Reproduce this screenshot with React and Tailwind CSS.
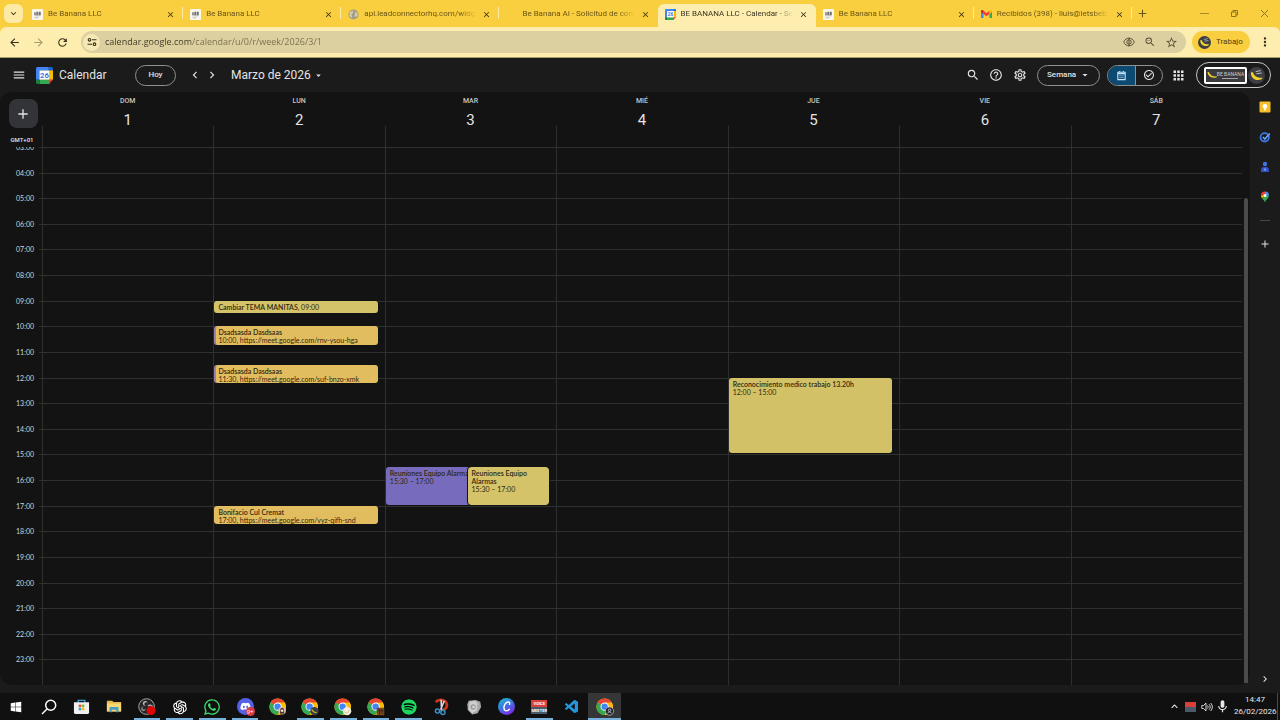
import React from 'react';
import {
  MdAdd,
  MdApps,
  MdArrowBack,
  MdArrowDropDown,
  MdArrowForward,
  MdCheckCircleOutline,
  MdChevronLeft,
  MdChevronRight,
  MdClose,
  MdHelpOutline,
  MdKeyboardArrowDown,
  MdKeyboardArrowUp,
  MdMenu,
  MdMic,
  MdMoreVert,
  MdOutlineSettings,
  MdRefresh,
  MdSearch,
  MdStarBorder,
  MdOutlineZoomOut,
} from 'react-icons/md';
import { FaDiscord, FaSpotify, FaWhatsapp, FaWindows } from 'react-icons/fa';
import { AiOutlineOpenAI } from 'react-icons/ai';
import { VscVscode } from 'react-icons/vsc';

const FIRST_HOUR = 3;
const LAST_HOUR = 24;
const HOURS = Array.from({ length: LAST_HOUR - FIRST_HOUR }, (_, i) => FIRST_HOUR + i);

const TABS = [
  { title: 'Be Banana LLC', icon: 'banana' },
  { title: 'Be Banana LLC', icon: 'banana' },
  { title: 'api.leadconnectorhq.com/widg', icon: 'globe' },
  { title: 'Be Banana AI - Solicitud de con', icon: 'none' },
  { title: 'BE BANANA LLC - Calendar - Se', icon: 'calendar', active: true },
  { title: 'Be Banana LLC', icon: 'banana' },
  { title: 'Recibidos (398) - lluis@letsbeb', icon: 'gmail' },
];

const DAYS = [
  { name: 'DOM', date: 1, events: [] },
  {
    name: 'LUN',
    date: 2,
    events: [
      { title: 'Cambiar TEMA MANITAS', detail: '09:00', inline: true, start: 9, end: 9.5, color: 'bg-[#d5c36a] px-1' },
      { title: 'Dsadsasda Dasdsaas', detail: '10:00, https://meet.google.com/rnv-ysou-hga', start: 10, end: 10.75, color: 'bg-[#e2bd5f] border-l-2 border-[#9c7fa8] px-0.5' },
      { title: 'Dsadsasda Dasdsaas', detail: '11:30, https://meet.google.com/suf-bnzo-xmk', start: 11.5, end: 12.25, color: 'bg-[#e2bd5f] border-l-2 border-[#9c7fa8] px-0.5' },
      { title: 'Bonifacio Cul Cremat', detail: '17:00, https://meet.google.com/vyz-qifh-snd', start: 17, end: 17.75, color: 'bg-[#e2bd5f] px-1' },
    ],
  },
  {
    name: 'MAR',
    date: 3,
    events: [
      { title: 'Reuniones Equipo Alarmas', detail: '15:30 – 17:00', start: 15.5, end: 17, left: 0, width: 52, nowrap: true, color: 'bg-[#766bbd] px-1' },
      { title: 'Reuniones Equipo Alarmas', detail: '15:30 – 17:00', start: 15.5, end: 17, left: 50, width: 50, color: 'bg-[#d5c36a] outline outline-[#131313] px-1' },
    ],
  },
  { name: 'MIÉ', date: 4, events: [] },
  {
    name: 'JUE',
    date: 5,
    events: [
      { title: 'Reconocimiento medico trabajo 13.20h', detail: '12:00 – 15:00', start: 12, end: 15, color: 'bg-[#d3c168] px-1' },
    ],
  },
  { name: 'VIE', date: 6, events: [] },
  { name: 'SÁB', date: 7, events: [] },
];

const percentOfDay = (hours) => `${(hours / (LAST_HOUR - FIRST_HOUR)) * 100}%`;

/* ---------- Logos ---------- */

const BananaFavicon = () => (
  <svg viewBox="0 0 12 12" className="size-[11px]">
    <rect width="12" height="12" rx="1" fill="#fbf7ea" />
    <path d="M2.500 3.500h1.500v3H2.500zM4.700 3h1.800v3.500H4.700zM7.200 3h2.300v3.500H7.200z" fill="#6c6c72" />
    <path d="M2.500 7h7v.8h-7z" fill="#9a9aa0" />
    <path d="M3 9.200h4v.8H3z" fill="#a9a0d0" />
  </svg>
);

const GlobeFavicon = () => (
  <svg viewBox="0 0 12 12" className="size-[11px]">
    <circle cx="6" cy="6" r="5.500" fill="#a39c88" />
    <path d="M2 3.500C3.500 2 5 2.200 6 2.800L5 5 3.500 5.500 4.500 8 3.500 9.500 1.500 7zM7.500 3l2.500 1 .5 2.500-2 2.500L7 7.500 8 5.500z" fill="#d9d0a8" />
  </svg>
);

const CalendarLogo = ({ className }) => (
  <svg viewBox="0 0 20 20" className={className}>
    <path d="M2 0h13v4H4v11H0V2a2 2 0 0 1 2-2z" fill="#4285f4" />
    <path d="M15 0h3a2 2 0 0 1 2 2v2h-5z" fill="#1967d2" />
    <path d="M16 4h4v11h-4z" fill="#fbbc04" />
    <path d="M4 15h12v5H4z" fill="#34a853" />
    <path d="M0 15h4v5H2a2 2 0 0 1-2-2z" fill="#188038" />
    <path d="M15 15h5l-5 5z" fill="#ea4335" />
    <path d="M4 4h12v11H4z" fill="#fff" />
    <text x="10" y="13" textAnchor="middle" fontSize="9" fontWeight="700" fill="#3b78e0" fontFamily="Roboto, sans-serif">26</text>
  </svg>
);

const GmailLogo = () => (
  <svg viewBox="0 0 24 18" className="w-[11px]">
    <path d="M0 3v13.500A1.500 1.500 0 0 0 1.500 18H5.500V8z" fill="#4285f4" />
    <path d="M24 3v13.500a1.500 1.500 0 0 1-1.500 1.500H18.500V8z" fill="#34a853" />
    <path d="M5.500 1.500v7L12 13.500l6.500-5v-7L12 6.500z" fill="#ea4335" />
    <path d="M0 3c0-2.500 2.500-3.500 4.500-2.200L5.500 1.500v7L0 4.500z" fill="#c5221f" />
    <path d="M24 3c0-2.500-2.500-3.500-4.500-2.200l-1 .7v7L24 4.500z" fill="#fbbc04" />
  </svg>
);

const BananaAvatar = ({ className }) => (
  <svg viewBox="0 0 20 20" className={className}>
    <circle cx="10" cy="10" r="10" fill="#3d3f45" />
    <path d="M3.500 6.500c-.5 6 5 11 12.500 8l1-2c-6 1.200-9.500-1.500-11.500-6.500z" fill="#f2d22e" />
    <path d="M9 5.500l6-1.500M10 8l6-1" stroke="#b9bbc2" strokeWidth="1.200" />
  </svg>
);

const ChromeLogo = ({ children }) => (
  <svg viewBox="0 0 24 24" className="size-[18px]">
    <circle cx="11.500" cy="11.500" r="11" fill="#fbbc04" />
    <path d="M11.500 11.500 L2 6 A11 11 0 0 1 21 6 z" fill="#ea4335" />
    <path d="M2 6 A11 11 0 0 0 11.500 22.500 L16.200 14.200 L11.500 11.500 z" fill="#34a853" />
    <path d="M11.500 6h9.600a11 11 0 0 1-9.600 16.500l4.700-8.300z" fill="#fbbc04" />
    <circle cx="11.500" cy="11.500" r="5.500" fill="#fff" />
    <circle cx="11.500" cy="11.500" r="4.300" fill="#4285f4" />
    {children}
  </svg>
);

const StoreLogo = () => (
  <svg viewBox="0 0 18 18" className="size-[17px]">
    <path d="M5.500 5V2.500h7V5" fill="none" stroke="#3fa0d8" strokeWidth="1.500" />
    <path d="M1 4.500h16V15a2 2 0 0 1-2 2H3a2 2 0 0 1-2-2z" fill="#f1f1f1" />
    <path d="M6 7h2.700v2.700H6z" fill="#e8502e" />
    <path d="M9.300 7H12v2.700H9.300z" fill="#7db928" />
    <path d="M6 10.300h2.700V13H6z" fill="#2aa5dd" />
    <path d="M9.300 10.300H12V13H9.300z" fill="#f5b91f" />
  </svg>
);

const ExplorerLogo = () => (
  <svg viewBox="0 0 18 16" className="w-4">
    <path d="M1 2h6l1.500 1.500H17V14H1z" fill="#e9b94a" />
    <path d="M1 5h16v9H1z" fill="#f8d775" />
    <path d="M4 9h10v6h-2.500v-3h-5v3H4z" fill="#4a9fc9" />
  </svg>
);

const ObsLogo = () => (
  <svg viewBox="0 0 20 20" className="size-[18px]">
    <circle cx="9.500" cy="9.500" r="8.700" fill="#242326" stroke="#b6b6b6" strokeWidth="1" />
    <circle cx="8" cy="6" r="2.600" fill="#bdbdbd" />
    <circle cx="6" cy="12" r="2.600" fill="#8d8d8d" />
    <circle cx="9" cy="6.800" r="2" fill="#242326" />
    <circle cx="6.800" cy="11" r="1.900" fill="#242326" />
    <path d="M11 9c2-2 5-1 5.500 1" stroke="#bdbdbd" strokeWidth="1.200" fill="none" />
    <circle cx="14.500" cy="14" r="5" fill="#e00505" />
  </svg>
);

const SnipLogo = () => (
  <svg viewBox="0 0 18 20" className="h-[18px]">
    <path d="M3 4.500c3-3.500 12-3.500 12.500 3.500-.3 3.500-2.500 5-5 5.500" stroke="#c9381e" strokeWidth="3" fill="none" />
    <path d="M9 2l.5 12M12.500 3L8.500 13" stroke="#d7d7d7" strokeWidth="1.800" />
    <circle cx="5" cy="14.500" r="2.300" stroke="#3b94cf" strokeWidth="1.600" fill="none" />
    <circle cx="11" cy="16" r="2.300" stroke="#3b94cf" strokeWidth="1.600" fill="none" />
  </svg>
);

const StoneLogo = () => (
  <svg viewBox="0 0 18 18" className="size-4">
    <path d="M3 2l8-1 5 2 1 6-4 7-6 1.500-5-5L1.500 6z" fill="#a8a8a8" />
    <path d="M4 3l6-1 3 3-1 8-5 3-4-4z" fill="#cfcfcf" />
    <circle cx="8" cy="9" r="3" fill="#9b9b9b" />
    <circle cx="8.500" cy="9" r="1.500" fill="#d8d8d8" />
  </svg>
);

const CanvaLogo = () => (
  <svg viewBox="0 0 20 20" className="size-[17px]">
    <defs>
      <linearGradient id="canva" x1="0" y1="0" x2="0.6" y2="1">
        <stop offset="0" stopColor="#19c3d0" />
        <stop offset="0.5" stopColor="#3a7ae0" />
        <stop offset="1" stopColor="#7c2be8" />
      </linearGradient>
    </defs>
    <circle cx="10" cy="10" r="10" fill="url(#canva)" />
    <path d="M13.500 7.500c.8-1.500 0-2.800-1.500-2.800-2.800 0-5 3.500-5 6.800 0 2.300 1.200 3.700 3 3.700 1.500 0 2.600-.8 3.400-2" stroke="#fff" strokeWidth="1.600" fill="none" strokeLinecap="round" />
  </svg>
);

const VoiceMeeterLogo = () => (
  <span className="flex w-4 flex-col text-center font-['Roboto','sans-serif'] text-[4px] leading-[7px] font-bold text-white">
    <span className="bg-[#d8403c]">VOICE</span>
    <span className="bg-[#4b5a68]">MEETER</span>
  </span>
);

/* ---------- Browser window ---------- */

const TabIcon = ({ icon }) => {
  if (icon === 'banana') return <BananaFavicon />;
  if (icon === 'globe') return <GlobeFavicon />;
  if (icon === 'calendar') return <CalendarLogo className="size-[11px]" />;
  if (icon === 'gmail') return <GmailLogo />;
  return <span className="size-[11px]" />;
};

const TabStrip = () => (
  <div className="flex h-[27px] items-end bg-[#f9cf40] text-[#6b5514]">
    <button aria-label="Buscar pestañas" className="mb-1 ml-1 flex size-[19px] items-center justify-center rounded-md bg-[#fdeaa4] text-[#3a3010]">
      <MdKeyboardArrowDown size={11} />
    </button>
    <div className="ml-0.5 flex min-w-0 flex-1 items-end">
      {TABS.map((tab, i) => (
        <div
          key={i}
          className={`relative flex h-[23px] min-w-0 flex-1 items-center pr-2 pb-[3px] pl-[7px] ${tab.active ? 'rounded-t-md bg-[#fdedaf] text-[#3d3620]' : ''}`}
        >
          <TabIcon icon={tab.icon} />
          <a
            href="#"
            className="ml-[5px] min-w-0 flex-1 overflow-hidden mask-r-from-85% font-['Roboto','sans-serif'] text-[8px] leading-3 whitespace-nowrap"
          >
            {tab.title}
          </a>
          <button aria-label="Cerrar pestaña" className="ml-1.5 text-[#3d3008]">
            <MdClose size={9} />
          </button>
          {!tab.active && i !== 3 && <span className="absolute top-[3px] right-0 h-3 w-px bg-[#fdeaa4]" />}
        </div>
      ))}
    </div>
    <div className="flex h-full w-[148px] items-center">
      <button aria-label="Nueva pestaña" className="ml-1">
        <MdAdd size={13} />
      </button>
      <div className="ml-auto flex items-center gap-[21px] pr-[11px]">
        <button aria-label="Minimizar" className="flex size-[9px] items-center">
          <span className="h-px w-full bg-[#a58a2c]" />
        </button>
        <button aria-label="Restaurar">
          <svg viewBox="0 0 9 9" className="size-[9px]" fill="none" stroke="#8d7423">
            <path d="M1.500 3h4.500v4.500H1.500zM3 3V1.500h4.500V6H6" />
          </svg>
        </button>
        <button aria-label="Cerrar">
          <svg viewBox="0 0 9 9" className="size-[9px]" stroke="#8d7423">
            <path d="M1 1l7 7M8 1l-7 7" />
          </svg>
        </button>
      </div>
    </div>
  </div>
);

const Toolbar = () => (
  <div className="bg-[#f9cf40]">
    <div className="flex h-[31px] items-center rounded-t-md border-b border-[#a89d6d] bg-[#fdedaf] text-[#38311a]">
      <button aria-label="Atrás" className="ml-2">
        <MdArrowBack size={13} />
      </button>
      <button aria-label="Adelante" className="ml-[11px] text-[#a99d6c]">
        <MdArrowForward size={13} />
      </button>
      <button aria-label="Recargar" className="ml-[11px]">
        <MdRefresh size={13} />
      </button>
      <div className="ml-3 flex h-[22px] flex-1 items-center gap-[13px] rounded-full bg-[#ddd0a0] pr-2 pl-0.5 text-[#5a5238]">
        <button aria-label="Información del sitio" className="flex size-[17px] items-center justify-center rounded-full bg-[#f7e9b4]">
          <svg viewBox="0 0 10 10" className="size-[10px]" fill="none" stroke="#38311a" strokeWidth="1.100">
            <circle cx="2.500" cy="2.800" r="1.300" />
            <path d="M5 2.800h4.500M.5 7.200H5" />
            <circle cx="7.500" cy="7.200" r="1.300" />
          </svg>
        </button>
        <input
          aria-label="Dirección"
          defaultValue="calendar.google.com/calendar/u/0/r/week/2026/3/1"
          className="-ml-2 min-w-0 flex-1 bg-linear-to-r from-[#3d3722] from-[86px] to-[#766d4c] to-[86px] bg-clip-text text-[9px] text-transparent outline-none"
        />
        <svg viewBox="0 0 12 10" className="-mr-1 w-3" fill="none" stroke="#5a5238">
          <path d="M.7 5C3-.2 9-.2 11.300 5 9 10.200 3 10.200.7 5zM6 .8v8.400" />
          <circle cx="6" cy="5" r="2.200" />
        </svg>
        <MdOutlineZoomOut size={12} className="-mr-1" />
        <button aria-label="Añadir a marcadores">
          <MdStarBorder size={13} />
        </button>
      </div>
      <button className="ml-1.5 flex h-[22px] w-[58px] items-center rounded-full bg-[#f9cf40] pl-1.5 font-['Roboto','sans-serif'] text-[8px] text-[#4d3d10]">
        <BananaAvatar className="mr-[5px] size-[13px]" />
        Trabajo
      </button>
      <button aria-label="Menú" className="mr-2 ml-2">
        <MdMoreVert size={14} />
      </button>
    </div>
  </div>
);

/* ---------- Calendar ---------- */

const Header = () => (
  <header className="flex h-[34px] items-center text-[#e3e3e3]">
    <button aria-label="Menú principal" className="ml-3">
      <MdMenu size={14} />
    </button>
    <a href="#" className="ml-2.5 flex w-[99px] items-center gap-1.5 text-[12px] leading-4">
      <CalendarLogo className="size-[17px]" />
      Calendar
    </a>
    <button className="h-[21px] w-[41px] rounded-full border border-[#8e918f] text-[8px] font-medium">Hoy</button>
    <button aria-label="Semana anterior" className="ml-3">
      <MdChevronLeft size={14} />
    </button>
    <button aria-label="Semana siguiente" className="ml-[3px]">
      <MdChevronRight size={14} />
    </button>
    <button className="ml-3 flex items-center text-[12px] leading-4">
      Marzo de 2026
      <MdArrowDropDown size={11} className="ml-0.5" />
    </button>

    <div className="ml-auto flex items-center pr-[9px]">
      <button aria-label="Buscar">
        <MdSearch size={14} />
      </button>
      <button aria-label="Ayuda" className="ml-[9px]">
        <MdHelpOutline size={14} />
      </button>
      <button aria-label="Configuración" className="ml-2.5">
        <MdOutlineSettings size={14} />
      </button>
      <div className="relative ml-2.5 flex items-center">
        <select aria-label="Vista" className="h-[21px] w-[63px] appearance-none rounded-full border border-[#8e918f] bg-transparent pl-[9px] text-[8px] font-medium">
          <option>Semana</option>
        </select>
        <MdArrowDropDown size={12} className="pointer-events-none absolute right-[9px]" />
      </div>
      <div className="ml-[7px] flex h-[21px] w-[56px] overflow-hidden rounded-full border border-[#8e918f]">
        <button aria-label="Calendario" className="flex flex-1 items-center justify-center border-r border-[#8e918f] bg-[#0d4a72] text-[#c2e7ff]">
          <svg viewBox="0 0 12 12" className="size-[11px]" fill="none" stroke="currentColor" strokeWidth="1.200">
            <path d="M2 2.500h8v8H2zM2 4h8M4 1v1.500M8 1v1.500" />
            <path d="M3.500 6.300h5M3.500 8.300h5" strokeWidth=".6" />
          </svg>
        </button>
        <button aria-label="Tareas" className="flex flex-1 items-center justify-center">
          <MdCheckCircleOutline size={12} />
        </button>
      </div>
      <button aria-label="Aplicaciones de Google" className="ml-2">
        <MdApps size={15} />
      </button>
      <button aria-label="Cuenta" className="ml-2.5 flex h-[26px] w-[75px] items-center justify-between rounded-full border border-[#c4c7c5] pr-[5px] pl-[7px]">
        <span className="flex h-[17px] w-[43px] items-center justify-center rounded-xs border-2 border-white bg-[#3b3b3e]">
          <svg viewBox="0 0 10 8" className="w-2.5">
            <path d="M.5 1c.5 4 3.500 6.500 9 5.500l.5-1C6 6 3.500 4.500 1.800 1z" fill="#f2d22e" />
          </svg>
          <span className="flex flex-col items-center text-[5px] leading-[5px] text-[#c9c9cc]">
            BE BANANA
            <span className="mt-px h-px w-4 bg-[#a5a5a5]" />
          </span>
        </span>
        <BananaAvatar className="size-[17px]" />
      </button>
    </div>
  </header>
);

const CalendarEvent = ({ event }) => {
  const { title, detail, start, end, left = 0, width = 100, inline, nowrap, color } = event;
  return (
    <button
      className={`absolute flex flex-col items-start overflow-hidden rounded-[3px] pt-0.5 text-left font-['Lato','sans-serif'] text-[7px] leading-2 text-[#30290f] ${color}`}
      style={{
        top: percentOfDay(start - FIRST_HOUR),
        height: `calc(${percentOfDay(end - start)} - 1px)`,
        left: `${left}%`,
        width: `${width}%`,
      }}
    >
      {inline ? (
        <span className="whitespace-nowrap">
          <span className="font-semibold">{title}</span>, {detail}
        </span>
      ) : (
        <>
          <span className={`font-semibold ${nowrap ? 'whitespace-nowrap' : ''}`}>{title}</span>
          <span className="whitespace-nowrap">{detail}</span>
        </>
      )}
    </button>
  );
};

const WeekView = () => (
  <main className="flex min-w-0 flex-1 flex-col rounded-xl bg-[#131313]">
    <div className="flex h-[55px]">
      <div className="flex w-[42px] flex-col items-center pr-1 pl-1 text-[6px] text-[#e3e3e3]">
        <button aria-label="Crear" className="mt-[7px] ml-1 flex size-[29px] shrink-0 items-center justify-center rounded-lg bg-[#333438]">
          <MdAdd size={16} />
        </button>
        <span className="mt-2 ml-0.5 leading-2 font-medium">GMT+01</span>
      </div>
      <div className="mr-2 grid flex-1 grid-cols-7">
        {DAYS.map((day) => (
          <div key={day.name} className="relative pt-[5px] text-center text-[#e3e3e3]">
            <div className="text-[7px] leading-2 font-medium text-[#c4c7c5]">{day.name}</div>
            <div className="mt-[7px] text-[15px] leading-4">{day.date}</div>
            <span className="absolute bottom-0 left-0 h-[21px] w-px bg-[#2e3030]" />
          </div>
        ))}
      </div>
    </div>

    <div className="flex min-h-0 flex-1 overflow-hidden">
      <div className="grid w-[42px] auto-rows-fr font-['Lato','sans-serif'] text-[7px] leading-2 text-[#d0d3d1]">
        {HOURS.map((hour) => (
          <div key={hour} className="flex min-h-0 justify-end gap-[5px]">
            <span className="-mt-1">{String(hour).padStart(2, '0')}:00</span>
            <span className="w-[3px] border-t border-[#2e3030]" />
          </div>
        ))}
      </div>
      <div className="relative grid flex-1 auto-rows-fr">
        {HOURS.map((hour) => (
          <div key={hour} className="min-h-0 border-t border-[#2e3030]" />
        ))}
        <div className="absolute inset-0 grid grid-cols-7">
          {DAYS.map((day) => (
            <div key={day.name} className="border-l border-[#2e3030] pr-[7px]">
              <div className="relative h-full">
                {day.events.map((event, i) => (
                  <CalendarEvent key={i} event={event} />
                ))}
              </div>
            </div>
          ))}
        </div>
      </div>
      <div className="flex w-2 flex-col items-center pt-[51px] pb-0.5">
        <div className="w-1 flex-1 rounded-t-xs bg-[#4a4b4c]" />
      </div>
    </div>
  </main>
);

const SidePanel = () => (
  <aside className="flex w-[30px] flex-col items-center pt-[9px] text-[#e3e3e3]">
    <button aria-label="Keep">
      <svg viewBox="0 0 12 12" className="size-3">
        <rect x=".5" y=".5" width="11" height="11" rx="1" fill="#f5bf2c" />
        <circle cx="6" cy="5.300" r="2.300" fill="#fff" />
        <path d="M5 7.500h2v1.800H5z" fill="#fff" />
      </svg>
    </button>
    <button aria-label="Tasks" className="mt-[18px]">
      <svg viewBox="0 0 12 12" className="size-3">
        <circle cx="5.700" cy="6.300" r="4.200" fill="none" stroke="#3b78e7" strokeWidth="1.800" />
        <path d="M3.800 6l2 2 5-5.500" fill="none" stroke="#6ba3ff" strokeWidth="1.600" />
      </svg>
    </button>
    <button aria-label="Contactos" className="mt-[18px]">
      <svg viewBox="0 0 12 12" className="size-3">
        <circle cx="6" cy="3" r="2.200" fill="#4272dd" />
        <path d="M2 11V9c0-2 1.500-3.200 4-3.200S10 7 10 9v2z" fill="#2f52c0" />
        <circle cx="6" cy="8.500" r="1.300" fill="#6d94f0" />
      </svg>
    </button>
    <button aria-label="Maps" className="mt-[18px]">
      <svg viewBox="0 0 12 12" className="size-3">
        <path d="M6 .5a4 4 0 0 1 4 4H6z" fill="#4f8df5" />
        <path d="M6 .5a4 4 0 0 0-4 4h4z" fill="#ea4335" />
        <path d="M2 4.500c0 1 .4 2 1 2.800L6 4.500z" fill="#fbbc04" />
        <path d="M10 4.500c0 3-3 3.500-4 7-.6-1.700-1.800-2.800-3-4.200l3-2.800z" fill="#34a853" />
        <circle cx="6" cy="4.500" r="1.500" fill="#fff" />
      </svg>
    </button>
    <span className="mt-[17px] h-px w-[10px] bg-[#444746]" />
    <button aria-label="Obtener complementos" className="mt-[17px]">
      <MdAdd size={12} />
    </button>
    <button aria-label="Ocultar panel lateral" className="mt-auto">
      <MdChevronRight size={12} />
    </button>
  </aside>
);

/* ---------- Taskbar ---------- */

const TASKBAR = [
  { name: 'Inicio', icon: <FaWindows size={12} className="text-white" /> },
  {
    name: 'Buscar',
    icon: (
      <svg viewBox="0 0 16 16" className="size-4" fill="none" stroke="#fff" strokeWidth="1.500">
        <circle cx="9.700" cy="6.300" r="5" />
        <path d="M6 10L1 15" />
      </svg>
    ),
  },
  { name: 'Microsoft Store', icon: <StoreLogo /> },
  { name: 'Explorador', icon: <ExplorerLogo /> },
  { name: 'OBS', icon: <ObsLogo />, open: true },
  { name: 'ChatGPT', icon: <AiOutlineOpenAI size={18} className="text-white" />, open: true },
  { name: 'WhatsApp', icon: <FaWhatsapp size={18} className="text-[#3ddc6d]" />, open: true },
  {
    name: 'Discord',
    icon: (
      <span className="relative flex size-[17px] items-center justify-center rounded-full bg-[#5560e8] text-white">
        <FaDiscord size={11} />
        <span className="absolute -right-px -bottom-px flex size-[9px] items-center justify-center rounded-full bg-[#d83a4a] text-[6px] leading-none">9+</span>
      </span>
    ),
    open: true,
  },
  {
    name: 'Chrome',
    icon: (
      <ChromeLogo>
        <circle cx="17.500" cy="17" r="5" fill="#d9c2b2" />
        <path d="M15 16c0-4 5-4 5 0l.5 5h-6z" fill="#5e3327" />
        <circle cx="17.500" cy="17" r="1.800" fill="#f0dccb" />
      </ChromeLogo>
    ),
  },
  {
    name: 'Chrome',
    icon: (
      <ChromeLogo>
        <circle cx="18" cy="17.500" r="5.500" fill="#3d3f45" />
        <path d="M14 15c1 4 4 6 8 4-4 0-6-1.500-7-4z" fill="#f2d22e" />
      </ChromeLogo>
    ),
    open: true,
  },
  {
    name: 'Chrome',
    icon: (
      <ChromeLogo>
        <circle cx="17.500" cy="17.500" r="5.500" fill="#f3f0dc" />
        <path d="M14 18c2 3 5 2 6.500-2" stroke="#b9b47c" fill="none" />
      </ChromeLogo>
    ),
    open: true,
  },
  {
    name: 'Chrome',
    icon: (
      <ChromeLogo>
        <path d="M13 13h10v10H13z" fill="#7a4a1f" />
        <path d="M14 17h8M16 14l1 8M20 15v6" stroke="#2b1b10" />
      </ChromeLogo>
    ),
    open: true,
  },
  { name: 'Spotify', icon: <FaSpotify size={16} className="rounded-full bg-black text-[#1ed760]" />, open: true },
  { name: 'Recortes', icon: <SnipLogo /> },
  { name: 'Stone', icon: <StoneLogo /> },
  { name: 'Canva', icon: <CanvaLogo /> },
  { name: 'VoiceMeeter', icon: <VoiceMeeterLogo />, open: true },
  { name: 'Visual Studio Code', icon: <VscVscode size={16} className="text-[#2596dd]" /> },
  {
    name: 'Chrome',
    icon: (
      <ChromeLogo>
        <circle cx="18" cy="17.500" r="5.500" fill="#22222c" stroke="#b7b7c8" />
        <circle cx="18" cy="16.300" r="1.700" fill="none" stroke="#dcdce8" />
        <path d="M15.300 20.500c1-2.500 4.400-2.500 5.400 0" fill="none" stroke="#dcdce8" />
      </ChromeLogo>
    ),
    open: true,
    active: true,
  },
];

const Taskbar = () => (
  <footer className="flex h-[27px] items-stretch bg-[#101011] text-[#e8e8e8]">
    <div className="grid w-[621px] grid-cols-19">
      {TASKBAR.map((item, i) => (
        <button
          key={i}
          aria-label={item.name}
          className={`relative flex items-center justify-center ${item.active ? 'bg-[#353637]' : ''}`}
        >
          {item.icon}
          {item.open && (
            <span className={`absolute bottom-0 h-0.5 bg-[#76b0dc] ${item.active ? 'inset-x-0' : 'inset-x-[3px]'}`} />
          )}
        </button>
      ))}
    </div>
    <div className="ml-auto flex items-center">
      <MdKeyboardArrowUp size={13} />
      <span className="ml-1 flex w-[11px] flex-col">
        <span className="h-[5px] bg-[#d8403c]" />
        <span className="h-[5px] bg-[#4b5a68]" />
      </span>
      <svg viewBox="0 0 12 12" className="ml-[5px] size-3" fill="none" stroke="currentColor" strokeWidth=".9">
        <path d="M.8 4.500h1.700L5 2v8L2.500 7.500H.8zM6.500 4.500c.8 1 .8 2 0 3M8 3.200c1.600 1.800 1.600 3.800 0 5.600M9.600 2c2.300 2.500 2.300 5.500 0 8" />
      </svg>
      <MdMic size={15} className="ml-0.5" />
      <div className="ml-1 w-[42px] pb-0.5 text-center font-['Roboto','sans-serif'] text-[8px] leading-3">
        <div>14:47</div>
        <div>26/02/2026</div>
      </div>
    </div>
    <span className="mr-0.5 ml-px w-px bg-[#4a4a4a]" />
  </footer>
);

export default function App() {
  return (
    <div className="flex h-screen flex-col overflow-hidden bg-[#1b1b1b] font-['Open_Sans','Noto_Sans','sans-serif']">
      <TabStrip />
      <Toolbar />
      <div className="flex min-h-0 flex-1 flex-col font-['Roboto','Liberation_Sans','sans-serif']">
        <Header />
        <div className="flex min-h-0 flex-1 pb-2">
          <WeekView />
          <SidePanel />
        </div>
      </div>
      <Taskbar />
    </div>
  );
}
